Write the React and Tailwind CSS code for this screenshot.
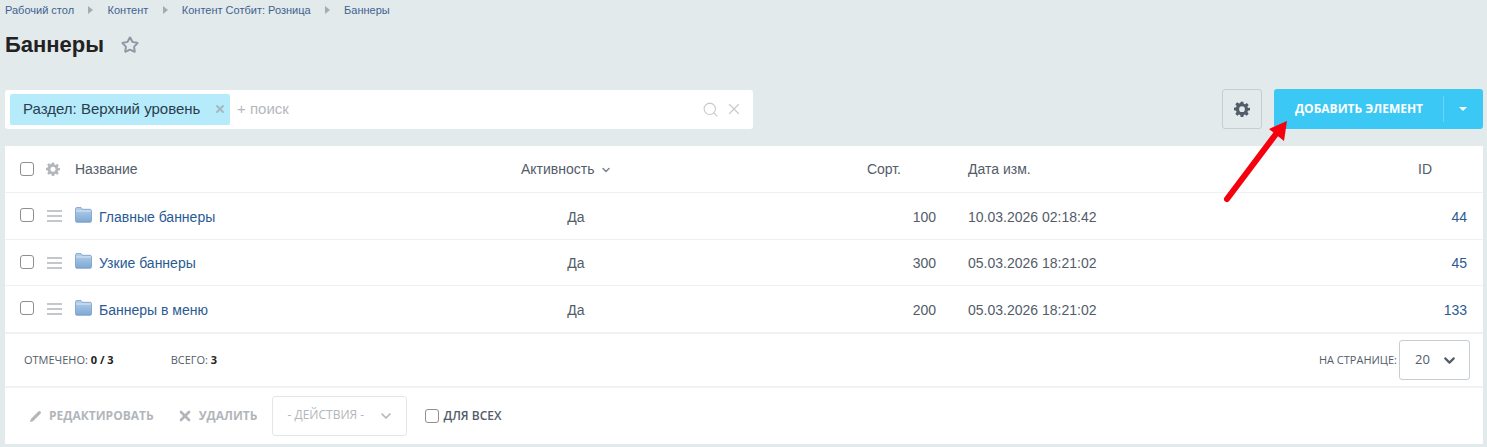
import { ChevronDown, Search, X, Star, Pencil } from 'lucide-react';

const rows = [
  { name: 'Главные баннеры', active: 'Да', sort: 100, date: '10.03.2026 02:18:42', id: 44, h: 'h-[47px]' },
  { name: 'Узкие баннеры', active: 'Да', sort: 300, date: '05.03.2026 18:21:02', id: 45, h: 'h-[46px]' },
  { name: 'Баннеры в меню', active: 'Да', sort: 200, date: '05.03.2026 18:21:02', id: 133, h: 'h-[47px]' },
];

const crumbs = ['Рабочий стол', 'Контент', 'Контент Сотбит: Розница', 'Баннеры'];

const Checkbox = ({ className = '' }) => (
  <span className={`block w-[14px] h-[14px] bg-white border border-[#8f8f8f] rounded-[3px] ${className}`} />
);

const Gear = ({ className, size }) => (
  <svg viewBox="0 0 24 24" width={size} height={size} className={className} fill="currentColor">
    <path
      fillRule="evenodd"
      d="M10 1h4l.6 3.2 1.9.8 2.7-1.9 2.8 2.8-1.9 2.7.8 1.9L24 10v4l-3.1.6-.8 1.9 1.9 2.7-2.8 2.8-2.7-1.9-1.9.8L14 24h-4l-.6-3.1-1.9-.8-2.7 1.9-2.8-2.8 1.9-2.7-.8-1.9L0 14v-4l3.1-.6.8-1.9L2 4.8 4.8 2l2.7 1.9 1.9-.8L10 1zm2 7a4.3 4.3 0 1 0 0 8.600a4.300 4.300 0 0 0 0-8.600z"
    />
  </svg>
);

const Folder = () => (
  <svg viewBox="0 0 17 16" width="17" height="16" className="shrink-0">
    <defs>
      <linearGradient id="folderFill" x1="0" y1="0" x2="0" y2="1">
        <stop offset="0" stopColor="#b4d0ec" />
        <stop offset="1" stopColor="#7fa8d4" />
      </linearGradient>
    </defs>
    <path d="M0.500 2.200C0.500 1 1.200 0.500 2 0.500h4l1.500 1.800H15c1 0 1.500 .6 1.500 1.500v10c0 .9-.6 1.500-1.500 1.500H2c-.9 0-1.500-.6-1.500-1.500z" fill="url(#folderFill)" stroke="#6d93bf" strokeWidth="0.700" />
    <path d="M1 4h15" stroke="#dbe8f5" strokeWidth="1" />
  </svg>
);

const Row = ({ row }) => (
  <div className={`flex items-center ${row.h} border-b border-[#eef0f1] text-[14px] text-[#535c69]`}>
    <div className="w-[70px] shrink-0 flex items-center pl-[15px] gap-[13px]">
      <Checkbox className="-mt-[2px]" />
      <span className="flex flex-col gap-[3px] w-[15px]">
        <span className="h-[2px] bg-[#c4c7cb]" />
        <span className="h-[2px] bg-[#c4c7cb]" />
        <span className="h-[2px] bg-[#c4c7cb]" />
      </span>
    </div>
    <div className="w-[420px] shrink-0 flex items-center gap-[7px]">
      <span className="-mt-[3px]"><Folder /></span>
      <span className="text-[#2b5a93] mt-[2px]">{row.name}</span>
    </div>
    <div className="w-[162px] shrink-0 text-center mt-[2px]">{row.active}</div>
    <div className="w-[279px] shrink-0 text-right mt-[2px]">{row.sort}</div>
    <div className="ml-[32px] mt-[2px]">{row.date}</div>
    <div className="flex-1 text-right pr-[16px] text-[#2b5a93] mt-[2px]">{row.id}</div>
  </div>
);

export default function App() {
  return (
    <div className="relative w-[1487px] h-[447px] overflow-hidden bg-[#e2eaec] font-['Liberation_Sans',Arial,sans-serif]">
      <div className="h-[20px] pl-[5px] flex items-center text-[11px] text-[#3f6290]">
        {crumbs.map((c, i) => (
          <span key={c} className="flex items-center">
            {i > 0 && <span className="mx-[14.250px] w-0 h-0 border-y-[4px] border-y-transparent border-l-[5px] border-l-[#a3acb5]" />}
            {c}
          </span>
        ))}
      </div>

      <div className="h-[50px] pl-[5px] flex items-center gap-[17px]">
        <h1 className="text-[22px] leading-none font-bold text-[#222222] -mt-[1px]">Баннеры</h1>
        <Star size={18} strokeWidth={2.6} className="text-[#8f98a3]" />
      </div>

      <div className="mt-[19px] h-[40px] pl-[5px] pr-[4px] flex items-center">
        <div className="w-[748px] h-[39px] bg-white rounded-[3px] flex items-center pl-[5px] pr-[10px]">
          <div className="w-[220px] h-[31px] bg-[#b5ebfb] rounded-[2px] flex items-center pl-[13px] pr-[4px] justify-between text-[15px] text-[#2b3d4d]">
            <span>Раздел: Верхний уровень</span>
            <X size={12} strokeWidth={4} className="text-[#a5b9c2]" />
          </div>
          <span className="ml-[7px] text-[15px] text-[#b4b8bd] flex-1">+ поиск</span>
          <Search size={17} strokeWidth={1.5} className="text-[#c5c9cc] mr-[6px]" />
          <X size={18} strokeWidth={1.5} className="text-[#c5c9cc]" />
        </div>

        <button className="ml-auto w-[40px] h-[40px] rounded-[3px] border border-[#c5ced2] flex items-center justify-center text-[#535c69]">
          <Gear size={16} />
        </button>
        <button className="ml-[12px] w-[209px] h-[40px] rounded-[3px] bg-[#3bc8f5] flex items-center text-white font-['Open_Sans',sans-serif] font-bold text-[12px]">
          <span className="w-[169px] text-center pl-[1px]">ДОБАВИТЬ ЭЛЕМЕНТ</span>
          <span className="w-px h-[26px] bg-[#68d6f8]" />
          <span className="flex-1 flex justify-center pr-[2px]">
            <span className="w-0 h-0 border-x-[4px] border-x-transparent border-t-[4px] border-t-white" />
          </span>
        </button>
      </div>

      <div className="mt-[17px] ml-[5px] w-[1478px] h-[298px] bg-white">
        <div className="flex items-center h-[47px] border-b border-[#eef0f1] text-[14px] text-[#535c69]">
          <div className="w-[70px] shrink-0 flex items-center pl-[15px] gap-[12px]">
            <Checkbox />
            <Gear size={14} className="text-[#b3b7bb]" />
          </div>
          <div className="w-[420px] shrink-0">Название</div>
          <div className="w-[160px] shrink-0 pl-[26px] flex items-center gap-[5px]">
            Активность <ChevronDown size={12} strokeWidth={3} className="text-[#7d858f] mt-[2px]" />
          </div>
          <div className="w-[281px] shrink-0 text-right pr-[35px]">Сорт.</div>
          <div className="ml-[32px]">Дата изм.</div>
          <div className="flex-1 text-right pr-[51px]">ID</div>
        </div>

        {rows.map((row) => (
          <Row key={row.id} row={row} />
        ))}

        <div className="flex items-center h-[55px] border-b-[2px] border-t border-[#f0f2f3] pl-[19px] pr-[13px] font-['Open_Sans',sans-serif] text-[11px] text-[#535c69]">
          <span>ОТМЕЧЕНО: <b className="font-bold text-[#222]">0 / 3</b></span>
          <span className="ml-[57px]">ВСЕГО: <b className="font-bold text-[#222]">3</b></span>
          <span className="ml-auto font-medium">НА СТРАНИЦЕ:</span>
          <div className="ml-[2px] w-[71px] h-[40px] rounded-[3px] border border-[#c6cdd3] flex items-center pl-[15px] pr-[11px] justify-between text-[13px]">
            20 <ChevronDown size={17} strokeWidth={3} />
          </div>
        </div>

        <div className="flex items-center h-[56px] pl-[24px] font-['Open_Sans',sans-serif] text-[12px] font-bold text-[#b2b6ba]">
          <Pencil size={13} strokeWidth={0} fill="currentColor" />
          <span className="ml-[7px]">РЕДАКТИРОВАТЬ</span>
          <X size={16} strokeWidth={4} className="ml-[23px]" />
          <span className="ml-[6px]">УДАЛИТЬ</span>
          <div className="ml-[15px] w-[135px] h-[40px] rounded-[3px] border border-[#e3e6e8] flex items-center pl-[14px] pr-[12px] justify-between font-normal">
            <span className="-mt-[2px]">- ДЕЙСТВИЯ -</span> <ChevronDown size={16} strokeWidth={2.5} />
          </div>
          <Checkbox className="ml-[18px]" />
          <span className="ml-[4px] font-semibold text-[#535c69]">ДЛЯ ВСЕХ</span>
        </div>
      </div>

      <svg viewBox="0 0 1487 447" className="absolute inset-0 w-[1487px] h-[447px] pointer-events-none">
        <path d="M1227 199 L1276 134" stroke="#f5000f" strokeWidth="6" strokeLinecap="round" />
        <path d="M1287 121 L1269 129 L1284 141 Z" fill="#f5000f" />
      </svg>
    </div>
  );
}
